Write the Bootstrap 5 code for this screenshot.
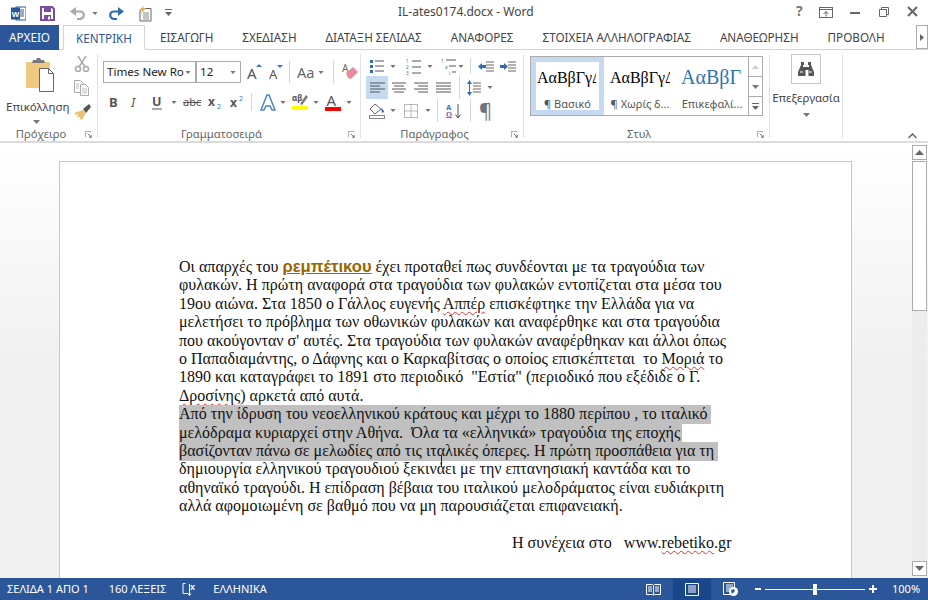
<!DOCTYPE html>
<html lang="el"><head><meta charset="utf-8"><title>IL-ates0174.docx - Word</title>
<link href="https://cdn.jsdelivr.net/npm/bootstrap@5.3.0/dist/css/bootstrap.min.css" rel="stylesheet">
<style>
html,body{height:600px;width:928px;overflow:hidden;margin:0}
body{font-family:"Noto Sans",sans-serif;color:#444;background:#fff;font-size:11.5px}
svg{display:block;flex:none}
.shell{height:600px}
.titlebar{height:25px;position:relative}
.qat{padding-left:11px;gap:0;height:22px}
.doc-title{position:absolute;left:398px;top:4px;font-size:12px;color:#444;line-height:16px}
.winbtns{position:absolute;right:0;top:0}
.tabsbar{height:25px;border-bottom:1px solid #d4d4d4;font-size:11.7px;position:relative}
.tabitem{white-space:nowrap;line-height:25px;flex:none}
.tab-file{background:#2b579a;color:#fff;width:59px;text-align:center;height:25px;margin-right:4px}
.tab-home{width:82px;height:25px;border:1px solid #d4d4d4;border-bottom:1px solid #fff;color:#2b579a;text-align:center;margin-right:15px;background:#fff}
.tab-gap{gap:29px}
.tab-more{position:absolute;right:0;top:0;width:12px;height:24px;border:1px solid #ababab;background:#fff}
.ribbon{height:93px;border-bottom:2px solid #dcdcdc;padding-top:4px;position:relative}
.rgroup{height:84px;border-right:1px solid #e1e1e1;flex:none;position:relative}
.g1{width:98px}.g2{width:263px;padding-left:5px}.g3{width:163px;padding-left:5px}.g4{width:246px;padding-left:6px}.g5{width:73px}
.glabel{position:absolute;left:0;right:0;top:72px;text-align:center;font-size:11.2px;line-height:16px;color:#666;padding-right:15px}
.launch{position:absolute;right:5px;top:77px}
.paste{width:72px}
.paste-label{font-size:11.5px;line-height:15px;color:#444;margin-top:7px;padding-left:6px}
.caret-row{padding-left:33px;padding-top:6px}
.clip-tools{width:24px;gap:8px;padding-top:2px;padding-left:2px}
.fontrow1{height:22px;margin-top:7px}
.fontrow2{margin-top:10px;height:18px}
.combo{height:22px;border:1px solid #ababab;background:#fff;font-size:11.6px;color:#222;line-height:20px;padding-left:3px;position:relative;white-space:nowrap}
.combo-f{width:94px;border-right-width:2px}.combo-s{width:44px;border-left:0}
.combo svg{position:absolute;right:4px;top:9px}
.case-label{font-size:14.5px;line-height:1;color:#666}
.vsep{width:1px;background:#d6d6d6;align-self:stretch;flex:none}
.sp2{width:2px;flex:none}.sp3{width:3px;flex:none}.sp4{width:4px;flex:none}.sp5{width:5px;flex:none}.sp6{width:6px;flex:none}.sp7{width:7px;flex:none}.sp8{width:8px;flex:none}.sp9{width:9px;flex:none}.sp10{width:10px;flex:none}
.prow{height:23px}
.prow-top{margin-top:4px;margin-bottom:2px;height:16px}
.active-al{background:#c5d9f1;width:22px;height:23px;display:flex;align-items:center;justify-content:center;flex:none}
.gallery{margin-top:2px;width:233px;height:60px;border:1px solid #ababab;background:#fff}
.gitem{width:72px;flex:none;overflow:hidden;text-align:center;padding-top:5px}
.gitem-on{border:5px solid #c5d9f1;width:73px;padding-top:0}
.gprev{font-family:"Liberation Serif",serif;font-size:16px;color:#000;line-height:24px;height:27px;white-space:nowrap;overflow:hidden;margin-top:4px;text-align:left;padding-left:6px;width:66px}
.gitem-on .gprev{padding-left:1px;width:60px}
.gprev-h{font-size:20px;color:#2e74b5;margin-top:1px;height:30px;line-height:28px;width:72px;padding-left:5px}
.gname{font-size:11px;line-height:14px;color:#555;white-space:nowrap;margin-top:4px}
.gscroll{width:15px;margin-left:auto;border-left:1px solid #ababab}
.gscroll>div{height:20px;border-bottom:1px solid #ababab;display:flex;align-items:center;justify-content:center}
.gscroll>div:last-child{border-bottom:0;height:18px}
.edit-btn{width:30px;height:30px;border:1px solid #c6c6c6;margin:0 auto;display:flex;align-items:center;justify-content:center}
.edit-label{font-size:11.5px;color:#444;text-align:center;line-height:15px;margin-top:6px}
.collapse-ic{position:absolute;left:908px;top:83px}
.docarea{flex:1 1 auto;background:linear-gradient(#fff,#f1f1f1 220px);position:relative;overflow:hidden;min-height:0}
.sheet{position:absolute;left:59px;top:18px;width:793px;height:460px;background:#fff;border:1px solid #c6c6c6;padding-top:96px;padding-left:119px}
.docline{font-family:"Liberation Serif",serif;font-size:16px;letter-spacing:.015px;line-height:18.4px;height:18.4px;color:#111;white-space:pre;display:block}
.hl{background:#c0c0c0;display:inline-block;height:18.7px;vertical-align:top}
.hl1{width:532px}.hl2{width:503px}.hl3{width:539px}
.hlink{font-family:"Liberation Sans",sans-serif;font-weight:700;color:#996600;text-decoration:underline;font-size:16.6px}
.sp{text-decoration:underline wavy #d33;text-decoration-thickness:1px;text-underline-offset:2px}
.cont{padding-left:333px}
.ibeam{position:absolute;left:381px;top:293px;width:1px;height:12px;background:#222}
.vbar{position:absolute;left:911px;top:2px;width:17px;bottom:0;padding-left:1px}
.vbtn{width:15px;height:15px;border:1px solid #ababab;background:#fff;display:flex;align-items:center;justify-content:center}
.vthumb{width:15px;height:150px;border:1px solid #ababab;background:#fff;margin-top:1px}
.vtrack{flex:1;background:#ededed;width:15px}
.vdown{margin-bottom:2px}
.statusbar{height:22px;background:#2b579a;color:#fff;font-size:11px;position:relative;white-space:nowrap;flex:none;padding-left:7px;line-height:22px}
.st-right{position:absolute;right:0;top:0;height:22px}
.view-on{background:#19478a;width:38px;height:21px;margin-top:1px;display:flex;align-items:center;justify-content:center}
.zoomtrack{width:100px;height:1px;background:#fff;position:relative;margin:0 4px}
.zoomthumb{position:absolute;left:48px;top:-5px;width:4px;height:11px;background:#fff}
.pct{width:36px;font-size:11px}
</style></head><body>
<svg width="0" height="0" class="position-absolute"><defs>
<symbol id="cr" viewBox="0 0 7 4"><path d="M0 0h7L3.500 4z" fill="#777"/></symbol>
<symbol id="launch" viewBox="0 0 9 9"><path d="M.5 8V.5H8" fill="none" stroke="#888"/><path d="M3.500 3.500 8 8M5 8h3V5" fill="none" stroke="#555"/></symbol>
</defs></svg>
<div class="shell d-flex flex-column">
 <div class="titlebar">
  <div class="qat d-flex align-items-center pt-1">
   <svg width="15" height="15" viewBox="0 0 15 15"><rect x="5" y="1" width="10" height="13" fill="#fff" stroke="#2b579a"/><path d="M9 4h4M9 6h4M9 8h4M9 10h4" stroke="#2b579a"/><rect y="1.500" width="9" height="12" fill="#2b579a"/><text x="4.500" y="10.500" font-size="8" text-anchor="middle" fill="#fff" font-weight="700" font-family="Liberation Sans">W</text></svg>
   <span class="sp9"></span><span class="sp5"></span>
   <svg width="15" height="15" viewBox="0 0 15 15"><path d="M1 1h11l2 2v11H1z" fill="none" stroke="#7b4d9e" stroke-width="2"/><rect x="4" y="1" width="7" height="5" fill="#7b4d9e"/><rect x="4" y="9" width="7" height="5" fill="#7b4d9e"/><rect x="8" y="10.500" width="2" height="3" fill="#fff"/></svg>
   <span class="sp10"></span><span class="sp5"></span>
   <svg width="16" height="13" viewBox="0 0 16 13"><path d="M5 4.500h5c5 0 5 7 0 7.500H7" fill="none" stroke="#a8a8a8" stroke-width="2.200"/><path d="M6 0 0 4.500 6 9z" fill="#a8a8a8"/></svg>
   <span class="sp6"></span><svg width="6" height="3"><use href="#cr"/></svg><span class="sp10"></span>
   <svg width="16" height="13" viewBox="0 0 16 13"><path d="M11 4.500H6c-5 0-5 7 0 7.500h3" fill="none" stroke="#2f6db0" stroke-width="2.200"/><path d="M10 0l6 4.500L10 9z" fill="#2f6db0"/></svg>
   <span class="sp10"></span><span class="sp4"></span>
   <svg width="14" height="17" viewBox="0 0 14 17"><path d="M4 3.500h9V16H2V5z" fill="#fff" stroke="#666"/><path d="M5 8h6M5 10h6M5 12h6M5 14h6" stroke="#888"/><path d="M6 0 2 5h2L3 9l5-6H5z" fill="#e9b44c"/></svg>
   <span class="sp9"></span><span class="sp4"></span>
   <svg width="7" height="8" viewBox="0 0 7 8"><path d="M0 0h7v1H0zM0 3h7L3.500 7z" fill="#666"/></svg>
  </div>
  <div class="doc-title">IL-ates0174.docx - Word</div>
  <div class="winbtns">
   <svg width="136" height="25" viewBox="-4 0 136 25"><text x="0" y="16" font-size="14" font-weight="700" fill="#777" font-family="Noto Sans">?</text><rect x="23.500" y="7.500" width="13" height="10" fill="none" stroke="#666"/><path d="M24 9.500h12" stroke="#666"/><path d="M30 16.500v-5m-2.500 2.500 2.500-2.500 2.500 2.500" fill="none" stroke="#666"/><rect x="54" y="12" width="10" height="2" fill="#666"/><path d="M83.500 9.500h7v7h-7z" fill="#fff" stroke="#666"/><path d="M85.500 9V7.500h7v7H91" fill="none" stroke="#666"/><path d="M112 7l9 9M121 7l-9 9" stroke="#666" stroke-width="2"/></svg>
  </div>
 </div>
 <div class="tabsbar d-flex">
  <div class="tabitem tab-file">ΑΡΧΕΙΟ</div>
  <div class="tabitem tab-home">ΚΕΝΤΡΙΚΗ</div>
  <div class="d-flex tab-gap">
   <div class="tabitem">ΕΙΣΑΓΩΓΗ</div><div class="tabitem">ΣΧΕΔΙΑΣΗ</div><div class="tabitem">ΔΙΑΤΑΞΗ ΣΕΛΙΔΑΣ</div><div class="tabitem">ΑΝΑΦΟΡΕΣ</div><div class="tabitem">ΣΤΟΙΧΕΙΑ ΑΛΛΗΛΟΓΡΑΦΙΑΣ</div><div class="tabitem">ΑΝΑΘΕΩΡΗΣΗ</div><div class="tabitem">ΠΡΟΒΟΛΗ</div>
  </div>
  <div class="tab-more d-flex align-items-center justify-content-center"><svg width="4" height="7" viewBox="0 0 4 7"><path d="M0 0l4 3.500L0 7z" fill="#666"/></svg></div>
 </div>
 <div class="ribbon d-flex">
  <div class="rgroup g1 d-flex">
   <div class="paste">
    <svg class="ms-4 mt-1" width="31" height="34" viewBox="0 0 31 34"><rect x="2" y="4" width="24" height="26" rx="1" fill="#efc97f"/><path d="M8 5l1-3h3l1-2h3l1 2h3l1 3z" fill="#7a7a7a"/><path d="M15.500 10.500h9l5 5v18h-14z" fill="#fff" stroke="#666"/><path d="M24.500 10.500v5h5" fill="none" stroke="#666"/></svg>
    <div class="paste-label">Επικόλληση</div>
    <div class="caret-row"><svg width="7" height="4"><use href="#cr"/></svg></div>
   </div>
   <div class="clip-tools d-flex flex-column">
    <svg width="16" height="16" viewBox="0 0 16 16"><circle cx="4" cy="13" r="2.500" fill="none" stroke="#aaa" stroke-width="1.500"/><circle cx="12" cy="13" r="2.500" fill="none" stroke="#aaa" stroke-width="1.500"/><path d="M5 11 12 0M11 11 4 0" stroke="#aaa" stroke-width="1.500"/></svg>
    <svg width="16" height="16" viewBox="0 0 16 16"><path d="M.5.500h6l3 3v9h-9z" fill="#fff" stroke="#aaa"/><path d="M6.500 4.500h5l3 3v8h-8z" fill="#fff" stroke="#aaa"/><path d="M8 9h5M8 11h5M8 13h5M2 4h3M2 6h3M2 8h3" stroke="#bbb"/></svg>
    <svg width="17" height="16" viewBox="0 0 17 16"><path d="M9 6 0 9l2 2 2-1-1 3 2 1 1-2v3l2 1 4-7z" fill="#e9c27a"/><path d="M9 5l3 4 5-6-2-3z" fill="#555"/></svg>
   </div>
   <div class="glabel">Πρόχειρο</div>
   <svg class="launch" width="7" height="7"><use href="#launch"/></svg>
  </div>
  <div class="rgroup g2">
   <div class="fontrow1 d-flex align-items-center">
    <div class="combo combo-f">Times New Ro<svg width="6" height="3"><use href="#cr"/></svg></div>
    <div class="combo combo-s">12<svg width="6" height="3"><use href="#cr"/></svg></div>
    <span class="sp6"></span>
    <svg width="16" height="19" viewBox="0 0 16 19"><text x="0" y="16" font-size="15" fill="#555" font-family="Noto Sans">A</text><path d="M9 4h6l-3-3z" fill="#3c78b5"/></svg>
    <span class="sp6"></span>
    <svg width="15" height="19" viewBox="0 0 15 19"><text x="0" y="16" font-size="13" fill="#555" font-family="Noto Sans">A</text><path d="M8 2h6l-3 3z" fill="#3c78b5"/></svg>
    <span class="sp5"></span><span class="vsep"></span><span class="sp7"></span>
    <span class="case-label">Aa</span><span class="sp4"></span><svg width="6" height="3"><use href="#cr"/></svg>
    <span class="sp9"></span><span class="vsep"></span><span class="sp8"></span>
    <svg width="17" height="27" viewBox="0 -4 17 27"><text x="0" y="9" font-size="10" fill="#666" font-family="Noto Sans">A</text><path d="M4 10 11 4l5 5-7 7-3-1z" fill="#ea8a9c"/></svg>
   </div>
   <div class="fontrow2 d-flex align-items-center">
    <span class="sp3"></span>
    <svg width="22" height="17" viewBox="0 0 22 17"><text x="3" y="13" font-size="13" font-weight="700" fill="#555" font-family="Noto Sans">B</text></svg>
    <svg width="22" height="17" viewBox="0 0 22 17"><text x="3" y="13" font-size="13" font-style="italic" fill="#555" font-family="Noto Sans">I</text></svg>
    <svg width="18" height="17" viewBox="0 0 18 17"><text x="2" y="12" font-size="12.500" font-weight="700" fill="#555" font-family="Noto Sans">U</text><path d="M2 15h10" stroke="#555"/></svg>
    <span class="sp3"></span><svg width="6" height="3"><use href="#cr"/></svg><span class="sp6"></span>
    <svg width="18" height="17" viewBox="0 0 18 17"><text x="0" y="12" font-size="11" fill="#555" font-family="Noto Sans">abc</text><path d="M0 8.500h18" stroke="#555"/></svg>
    <span class="sp7"></span>
    <svg width="17" height="17" viewBox="0 0 17 17"><text x="0" y="12" font-size="12" font-weight="700" fill="#555" font-family="Noto Sans">x</text><text x="9" y="15" font-size="7" fill="#3c78b5" font-family="Noto Sans">2</text></svg>
    <span class="sp5"></span>
    <svg width="15" height="17" viewBox="0 0 15 17"><text x="0" y="13" font-size="12" font-weight="700" fill="#555" font-family="Noto Sans">x</text><text x="9" y="7" font-size="7" fill="#3c78b5" font-family="Noto Sans">2</text></svg>
    <span class="sp6"></span><span class="vsep"></span><span class="sp8"></span>
    <svg width="16" height="17" viewBox="0 0 16 17"><path d="M1 16 7 1h2l6 15h-3l-2-4H6l-2 4z" fill="#fff" stroke="#4a86c5" stroke-width="1.500"/></svg>
    <span class="sp4"></span><svg width="6" height="3"><use href="#cr"/></svg><span class="sp6"></span>
    <svg width="17" height="18" viewBox="0 0 17 18"><text x="0" y="8" font-size="8" font-weight="700" fill="#555" font-family="Noto Sans">αβ</text><path d="M8 11 14 2l2 2-6 8z" fill="#777"/><rect y="13" width="16" height="4" fill="#ff0"/></svg>
    <span class="sp4"></span><svg width="6" height="3"><use href="#cr"/></svg><span class="sp6"></span>
    <svg width="17" height="26" viewBox="0 -4 17 26"><text x="1.500" y="13" font-size="15" fill="#555" font-family="Noto Sans">A</text><rect y="14" width="16" height="4" fill="#f00"/></svg>
    <span class="sp4"></span><svg width="6" height="3"><use href="#cr"/></svg>
   </div>
   <div class="glabel">Γραμματοσειρά</div>
   <svg class="launch" width="7" height="7"><use href="#launch"/></svg>
  </div>
  <div class="rgroup g3">
   <div class="prow-top d-flex align-items-center">
    <span class="sp4"></span>
    <svg width="14" height="14" viewBox="0 0 14 14"><path d="M5 2h9M5 7h9M5 12h9" stroke="#555"/><path d="M0 1h3v3H0zM0 6h3v3H0zM0 11h3v3H0z" fill="#2f6db0"/></svg>
    <span class="sp6"></span><svg width="6" height="3"><use href="#cr"/></svg><span class="sp5"></span><span class="sp5"></span>
    <svg width="15" height="18" viewBox="0 -2 15 18"><path d="M6 2h9M6 8h9M6 14h9" stroke="#555"/><text x="0" y="4" font-size="4.500" fill="#2f6db0">1</text><text x="0" y="10" font-size="4.500" fill="#2f6db0">2</text><text x="0" y="16" font-size="4.500" fill="#2f6db0">3</text></svg>
    <span class="sp6"></span><svg width="6" height="3"><use href="#cr"/></svg><span class="sp8"></span>
    <svg width="15" height="18" viewBox="0 -2 15 18"><path d="M5 1h10M8 7h7M11 13h4" stroke="#555"/><text x="0" y="4" font-size="4.500" fill="#2f6db0">1</text><text x="4" y="10" font-size="4.500" fill="#2f6db0">a</text><text x="8" y="16" font-size="4.500" fill="#2f6db0">i</text></svg>
    <span class="sp2"></span><svg width="6" height="3"><use href="#cr"/></svg><span class="sp6"></span><span class="vsep"></span><span class="sp7"></span>
    <svg width="16" height="11" viewBox="0 0 16 11"><path d="M8 1h8M8 4h8M8 7h8M8 10h8" stroke="#666"/><path d="M0 5.500 4 2v2h4v3H4v2z" fill="#2f6db0"/></svg>
    <span class="sp6"></span>
    <svg width="16" height="11" viewBox="0 0 16 11"><path d="M8 1h8M8 4h8M8 7h8M8 10h8" stroke="#666"/><path d="M8 5.500 4 2v2H0v3h4v2z" fill="#2f6db0"/></svg>
   </div>
   <div class="prow d-flex align-items-center">
    <span class="active-al"><svg width="15" height="12" viewBox="0 0 15 12"><path d="M0 1h15M0 4h10M0 7h15M0 10h10" stroke="#555"/></svg></span>
    <span class="sp4"></span>
    <svg width="14" height="12" viewBox="0 0 14 12"><path d="M0 1h14M2 4h10M0 7h14M2 10h10" stroke="#555"/></svg>
    <span class="sp8"></span>
    <svg width="14" height="12" viewBox="0 0 14 12"><path d="M0 1h14M4 4h10M0 7h14M4 10h10" stroke="#555"/></svg>
    <span class="sp8"></span>
    <svg width="15" height="12" viewBox="0 0 15 12"><path d="M0 1h15M0 4h15M0 7h15M0 10h15" stroke="#555"/></svg>
    <span class="sp8"></span><span class="vsep"></span><span class="sp7"></span>
    <svg width="14" height="16" viewBox="0 0 14 16"><path d="M2.500 1v14" stroke="#2f6db0"/><path d="M0 4l2.500-4L5 4zM0 12l2.500 4L5 12z" fill="#2f6db0"/><path d="M6 3h8M6 6h8M6 9h8M6 12h8" stroke="#666"/></svg>
    <span class="sp6"></span><svg width="6" height="3"><use href="#cr"/></svg>
   </div>
   <div class="prow d-flex align-items-center">
    <span class="sp3"></span>
    <svg width="16" height="16" viewBox="0 0 16 16"><path d="M6 1 1 6l5 5 6-5z" fill="#fff" stroke="#666"/><path d="M12 5c2 1 3 3 3 4l-2 1z" fill="#2f6db0"/><rect x=".5" y="12.500" width="15" height="3" fill="#fff" stroke="#888"/></svg>
    <span class="sp5"></span><svg width="6" height="3"><use href="#cr"/></svg><span class="sp8"></span>
    <svg width="14" height="14" viewBox="0 0 14 14"><path d="M.5.500h13v13H.5zM7 .5v13M.5 7h13" fill="none" stroke="#777" stroke-dasharray="1 1"/></svg>
    <span class="sp7"></span><svg width="6" height="3"><use href="#cr"/></svg><span class="sp6"></span><span class="vsep"></span><span class="sp8"></span>
    <svg width="15" height="16" viewBox="0 0 15 16"><text x="0" y="7" font-size="7.500" font-weight="700" fill="#2f6db0" font-family="Liberation Sans">A</text><text x="0" y="15" font-size="7.500" font-weight="700" fill="#7b4d9e" font-family="Liberation Serif">Ω</text><path d="M12 1v13M9.500 11.500 12 15l2.500-3.500" fill="none" stroke="#555"/></svg>
    <span class="sp9"></span><span class="vsep"></span><span class="sp8"></span>
    <span class="fs-5 lh-1 text-secondary">¶</span>
   </div>
   <div class="glabel">Παράγραφος</div>
   <svg class="launch" width="7" height="7"><use href="#launch"/></svg>
  </div>
  <div class="rgroup g4">
   <div class="gallery d-flex">
    <div class="gitem gitem-on"><div class="gprev">ΑαΒβΓγΔ</div><div class="gname">¶ Βασικό</div></div>
    <div class="gitem"><div class="gprev">ΑαΒβΓγΔ</div><div class="gname">¶ Χωρίς δ...</div></div>
    <div class="gitem"><div class="gprev gprev-h">ΑαΒβΓ</div><div class="gname">Επικεφαλί...</div></div>
    <div class="gscroll"><div><svg width="7" height="4" viewBox="0 0 7 4"><path d="M0 4h7L3.500 0z" fill="#ccc"/></svg></div><div><svg width="7" height="4"><use href="#cr"/></svg></div><div><svg width="7" height="7" viewBox="0 0 7 7"><path d="M0 0h7v1H0zM0 3h7L3.500 7z" fill="#666"/></svg></div></div>
   </div>
   <div class="glabel">Στυλ</div>
   <svg class="launch" width="7" height="7"><use href="#launch"/></svg>
  </div>
  <div class="rgroup g5">
   <div class="edit-btn"><svg width="16" height="14" viewBox="0 0 16 14"><path d="M3 0h3v3h-1v2h6V3h-1V0h3v3l3 7v4h-5.500V8h-3v6H0v-4l3-7z" fill="#555"/><path d="M2 10h3M11 10h3" stroke="#fff"/></svg></div>
   <div class="edit-label">Επεξεργασία</div>
   <div class="d-flex justify-content-center pt-1 mt-1"><svg width="7" height="4"><use href="#cr"/></svg></div>
  </div>
  <svg class="collapse-ic" width="9" height="6" viewBox="0 0 9 6"><path d="M.5 5 4.500 1l4 4" fill="none" stroke="#666" stroke-width="1.500"/></svg>
 </div>
 <div class="docarea">
  <div class="sheet">
   <span class="docline">Οι απαρχές του <span class="hlink">ρεμπέτικου</span> έχει προταθεί πως συνδέονται με τα τραγούδια των</span>
   <span class="docline">φυλακών. Η πρώτη αναφορά στα τραγούδια των φυλακών εντοπίζεται στα μέσα του</span>
   <span class="docline">19ου αιώνα. Στα 1850 ο Γάλλος ευγενής <span class="sp">Αππέρ</span> επισκέφτηκε την Ελλάδα για να</span>
   <span class="docline">μελετήσει το πρόβλημα των οθωνικών φυλακών και αναφέρθηκε και στα τραγούδια</span>
   <span class="docline">που ακούγονταν σ' αυτές. Στα τραγούδια των φυλακών αναφέρθηκαν και άλλοι όπως</span>
   <span class="docline">ο Παπαδιαμάντης, ο Δάφνης και ο Καρκαβίτσας ο οποίος επισκέπτεται  το <span class="sp">Μοριά</span> το</span>
   <span class="docline">1890 και καταγράφει το 1891 στο περιοδικό  "Εστία" (περιοδικό που εξέδιδε ο Γ.</span>
   <span class="docline"><span class="sp">Δροσίνης</span>) αρκετά από αυτά.</span>
   <span class="docline"><span class="hl hl1">Από την ίδρυση του νεοελληνικού κράτους και μέχρι το 1880 περίπου , το ιταλικό </span></span>
   <span class="docline"><span class="hl hl2">μελόδραμα κυριαρχεί στην Αθήνα.  Όλα τα «ελληνικά» τραγούδια της εποχής </span></span>
   <span class="docline"><span class="hl hl3">βασίζονταν πάνω σε μελωδίες από τις ιταλικές όπερες. Η πρώτη προσπάθεια για τη </span></span>
   <span class="docline">δημιουργία ελληνικού τραγουδιού ξεκινάει με την επτανησιακή καντάδα και το</span>
   <span class="docline">αθηναϊκό τραγούδι. Η επίδραση βέβαια του ιταλικού μελοδράματος είναι ευδιάκριτη</span>
   <span class="docline">αλλά αφομοιωμένη σε βαθμό που να μη παρουσιάζεται επιφανειακή.</span>
   <span class="docline"> </span>
   <span class="docline cont">Η συνέχεια στο   www.<span class="sp">rebetiko</span>.gr</span>
   <span class="ibeam"></span>
  </div>
  <div class="vbar d-flex flex-column">
   <div class="vbtn"><svg width="9" height="5" viewBox="0 0 9 5"><path d="M0 5h9L4.500 0z" fill="#666"/></svg></div>
   <div class="vthumb"></div>
   <div class="vtrack"></div>
   <div class="vbtn vdown"><svg width="9" height="5" viewBox="0 0 9 5"><path d="M0 0h9L4.500 5z" fill="#666"/></svg></div>
  </div>
 </div>
 <div class="statusbar d-flex align-items-center">
  <span>ΣΕΛΙΔΑ 1 ΑΠΟ 1</span><span class="ms-3 ps-1">160 ΛΕΞΕΙΣ</span>
  <svg class="ms-3 me-3" width="15" height="15" viewBox="0 0 15 15"><path d="M3.500 1.500H1v10h5l1.500 2 1.500-2M7.500 2v11" fill="none" stroke="#fff"/><text x="8" y="8" font-size="9" font-weight="700" fill="#fff" font-family="Liberation Sans">x</text></svg>
  <span>ΕΛΛΗΝΙΚΑ</span>
  <div class="st-right d-flex align-items-center">
   <svg width="15" height="13" viewBox="0 0 15 13"><path d="M.5 1.500h6l1 1 1-1h6v10h-6l-1 1-1-1h-6zM7.500 2.500v9M2 4h4M2 6h4M2 8h4M9 4h4M9 6h4M9 8h4" fill="none" stroke="#fff"/></svg>
   <span class="sp10"></span><span class="sp2"></span>
   <div class="view-on"><svg width="14" height="13" viewBox="0 0 14 13"><path d="M.5.500h13v12H.5zM3 3h8M3 5h8M3 7h8M3 9h8" fill="none" stroke="#fff"/></svg></div>
   <span class="sp10"></span><span class="sp2"></span>
   <svg width="15" height="14" viewBox="0 0 15 14"><path d="M.5.500h11v12H.5zM3 3h7M3 5h7M3 7h4M3 9h4" fill="none" stroke="#fff"/><circle cx="10.500" cy="9.500" r="4.500" fill="#fff"/><path d="M8 8l3-1 1 2-3 3z" fill="#2b579a"/></svg>
   <span class="sp10"></span><span class="sp7"></span>
   <svg width="6" height="2"><rect width="6" height="2" fill="#fff"/></svg>
   <div class="zoomtrack"><div class="zoomthumb"></div></div>
   <svg width="8" height="8" viewBox="0 0 8 8"><path d="M0 3h8v2H0zM3 0h2v8H3z" fill="#fff"/></svg>
   <span class="sp10"></span><span class="sp5"></span>
   <span class="pct">100%</span>
  </div>
 </div>
</div>
</body></html>
